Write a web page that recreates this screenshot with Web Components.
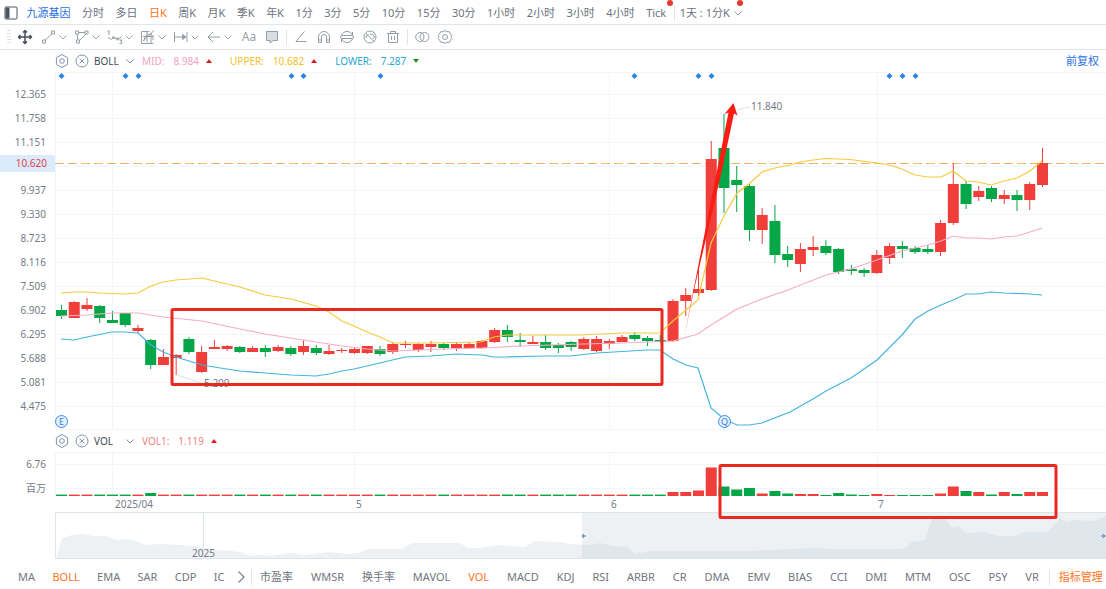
<!DOCTYPE html>
<html lang="zh-CN">
<head>
<meta charset="utf-8">
<meta name="viewport" content="width=device-width, initial-scale=1">
<title>九源基因 日K</title>
<style>
  html, body { margin: 0; background: #fff; }
  body {
    font-family: "Noto Sans", "Noto Sans CJK SC", sans-serif;
    font-size: 11px; line-height: 16px; color: #747b86;
    --up: #f03e3b; --down: #04a647; --rule: #dfe6ea; --grid: #f1f6f8;
    --accent: #ff7425; --link: #2b6fe3; --mark: #ea2a20;
  }
</style>
</head>
<body>
<stock-workspace></stock-workspace>

<script>
const BASE = `*{box-sizing:border-box} button{font:inherit;color:inherit;background:none;border:0;padding:0;margin:0;cursor:pointer;white-space:nowrap}
svg{display:block} .ico{fill:none;stroke:currentColor;stroke-width:1;stroke-linejoin:round}`;

function define(tag, css, html) {
  const tpl = document.createElement('template');
  tpl.innerHTML = `<style>${BASE}${css}</style>`;
  customElements.define(tag, class extends HTMLElement {
    connectedCallback() {
      if (this.shadowRoot) return;
      const root = this.attachShadow({ mode: 'open' });
      root.append(tpl.content.cloneNode(true));
      const body = document.createElement('template');
      body.innerHTML = typeof html === 'function' ? html(this) : html;
      root.append(body.content);
    }
  });
}

/* ---------- icons ---------- */
const ICONS = {
  panel: '<rect x="2" y="2" width="12" height="12" rx="1"/><path d="M3 3h3v10H3z" fill="currentColor"/>',
  move: '<path d="M8 1.5v13M1.5 8h13M6 3.5l2-2 2 2M6 12.5l2 2 2-2M3.5 6l-2 2 2 2M12.5 6l2 2-2 2" stroke-width="1.5"/>',
  line: '<rect x="1.5" y="11" width="3" height="3"/><rect x="10.5" y="2" width="3" height="3"/><path d="M4.5 11l6-6"/>',
  shape: '<rect x="1.5" y="2" width="3" height="3"/><rect x="11" y="2" width="3" height="3"/><rect x="2.5" y="11" width="3" height="3"/><path d="M4.5 3.5H11M3 5l.8 6M5.5 11.5L12 5"/>',
  wave: '<path d="M.5 3L2 1.5V6M1 8.500l3.500 2 2-2 4 1.500 4-2M12.500 11h2.500l-1.500 1.500q2 0 1.500 1.500t-2.500.5"/><circle cx="6.500" cy="8.500" r="1"/><circle cx="10.500" cy="10" r="1"/>',
  hatch: '<path d="M1.5 2.500v12h12M1.5 2.500h8M3 12L14 1.500M3 7.500h10M7 2.500v11M11 5v9M4 12q0-7 8-7M13 6v5"/>',
  measure: '<path d="M1.5 3v10M14 3v10M2 8h11"/><path d="M9.5 5.500L13 8l-3.500 2.500z" fill="currentColor"/>',
  back: '<path d="M14 8H2M7 3L2 8l5 5"/>',
  note: '<path d="M2.500 2.500h11v9H9l-3 2.500v-2.500H2.500z" fill="#d9dde2"/>',
  angle: '<path d="M11.500 2.500L3 12.500h10.500"/>',
  magnet: '<path d="M2.500 13.500V8a5.500 5.500 0 0 1 11 0v5.500h-3V8a2.500 2.500 0 0 0-5 0v5.500zM2.500 11h3M10.500 11h3"/>',
  sync: '<path d="M2.500 6a6 6 0 0 1 11 0M13.500 10a6 6 0 0 1-11 0"/><rect x="1.500" y="6.500" width="13" height="3" rx="1.500"/><path d="M13.500 3v3M2.500 13v-3"/>',
  hide: '<circle cx="8" cy="8" r="6"/><path d="M3.500 4l9 9M4 9q0-3 2.500-3.500M8 5q3.500 0 4.500 3-.5 1.500-1.500 2"/>',
  trash: '<path d="M2 4.500h12M5.500 4.500v-2h5v2M3.500 4.500v9h9v-9M6.500 7v4M9.500 7v4"/>',
  link: '<path d="M8 3.900A4.500 4.500 0 1 0 8 12.100"/><circle cx="10.500" cy="8" r="4.500"/><path d="M8 4a5 5 0 0 1 0 8"/>',
  gear: '<path d="M8 1.500l2 1.300 2.400-.1 1 2.300 1.400 1.500L14 8l.8 1.500-1.400 1.500-1 2.300-2.400-.1L8 14.500l-2-1.300-2.400.1-1-2.300-1.400-1.500L2 8l-.8-1.500L2.600 5l1-2.300 2.400.1z"/><circle cx="8" cy="8" r="2.500"/>',
  hex: '<path d="M8 1.500l5.600 3.200v6.600L8 14.500l-5.600-3.200V4.700z"/><circle cx="8" cy="8" r="2.300"/>',
  close: '<circle cx="8" cy="8" r="6"/><path d="M5.700 5.700l4.600 4.600M10.300 5.700l-4.600 4.600"/>',
  down: '<path d="M4.500 6.500L8 10l3.500-3.500"/>',
  next: '<path d="M5.500 2.500L11 8l-5.500 5.500" stroke-width="1.300"/>'
};
const svgIcon = n => `<svg class="ico" width="16" height="16" viewBox="0 0 16 16" aria-hidden="true">${ICONS[n]}</svg>`;
define('chart-icon', ':host{display:block;width:16px;height:16px;flex:none}', el => svgIcon(el.getAttribute('name')));

/* ---------- period bar ---------- */
define('period-bar', `
  :host{display:block;border-bottom:1px solid var(--rule)}
  nav{display:flex;align-items:center;justify-content:space-between;max-width:746px;height:24px;padding:2px 0 0 3px;color:#6c737e}
  chart-icon{color:#4c5462}
  .name{color:var(--link);margin-left:-4px}.on{color:var(--accent)}
  .dot{position:relative}
  .dot::after{content:"";position:absolute;right:-7px;top:-5px;width:6px;height:6px;border-radius:50%;background:#e33a35}
  .more{display:flex;align-items:center;border-left:1px solid var(--rule);padding-left:5px;margin-left:-4px}
  .more chart-icon{color:#9aa3b0}.more::after{right:3px}`,
  `<nav aria-label="周期"><chart-icon name="panel"></chart-icon><button class="name">九源基因</button>` +
  '分时 多日 日K 周K 月K 季K 年K 1分 3分 5分 10分 15分 30分 1小时 2小时 3小时 4小时 Tick'.split(' ')
    .map(t => `<button class="${t === '日K' ? 'on' : t === 'Tick' ? 'dot' : ''}">${t}</button>`).join('') +
  `<button class="more dot">1天 : 1分K<chart-icon name="down"></chart-icon></button></nav>`);

/* ---------- drawing tools ---------- */
define('draw-toolbar', `
  :host{display:block;border-bottom:1px solid var(--rule)}
  div{display:flex;align-items:center}
  .bar{height:24px;padding-left:7px;color:#969da7}
  .grip{width:4px;height:15px;margin-right:6px;background:repeating-linear-gradient(#dde1e6 0 1px,transparent 1px 3px)}
  .first{color:#454d5c;margin-right:8px}
  .menus{gap:5px}.menus button{display:flex}.menus chart-icon+chart-icon{margin-left:-2px;width:14px;overflow:hidden}
  .menus chart-icon+chart-icon{color:#9ba4b0}
  .single{gap:7px;padding:0 6px}.menus+.single{padding-left:7px}.single+.single{border-left:1px solid var(--rule)}
  .text{width:16px;font-size:12px}`,
  `<div class="bar"><span class="grip"></span><button class="first" aria-label="move"><chart-icon name="move"></chart-icon></button>
   <div class="menus">${['line','shape','wave','hatch','measure','back'].map(n => `<button aria-label="${n}"><chart-icon name="${n}"></chart-icon><chart-icon name="down"></chart-icon></button>`).join('')}</div>
   <div class="single"><button class="text">Aa</button><button aria-label="note"><chart-icon name="note"></chart-icon></button></div>
   <div class="single">${['angle','magnet','sync','hide','trash'].map(n => `<button aria-label="${n}"><chart-icon name="${n}"></chart-icon></button>`).join('')}</div>
   <div class="single">${['link','gear'].map(n => `<button aria-label="${n}"><chart-icon name="${n}"></chart-icon></button>`).join('')}</div></div>`);

/* ---------- indicator legend ---------- */
define('indicator-legend', `
  :host{display:flex;align-items:center;height:22px;padding:0 7px 0 54px;font-size:10px}
  .tool{color:#7f93ad;margin-right:4px}
  .name{display:flex;align-items:center;justify-content:space-between;min-width:44px;color:#434a56}
  .name chart-icon{color:#8091a6}
  ::slotted(a){margin-left:auto;font-size:11px;color:var(--link);text-decoration:none}`,
  el => `<button class="tool" aria-label="settings"><chart-icon name="hex"></chart-icon></button><button class="tool" aria-label="close"><chart-icon name="close"></chart-icon></button>
   <button class="name">${el.getAttribute('name')}<chart-icon name="down"></chart-icon></button><slot></slot>`);

define('legend-value', `
  :host{display:flex;align-items:center;margin-left:4px;margin-right:14px}
  b{font-weight:400;margin:0 7px 0 9px}
  i{width:0;height:0;border:3px solid transparent;border-top:0;border-bottom:4px solid #d3201f}
  :host([trend="down"]) i{border-bottom:0;border-top:4px solid #279322}`,
  `<slot name="label"></slot><b><slot></slot></b><i></i>`);

/* ---------- market data: [rising, high, bodyTop, bodyBottom, low] on the panel's vertical grid ---------- */
const CANDLES = [
  [0,305,310,316,319],[1,301,302,318,318],[1,298,305,309,311],[0,305,306,318,323],[0,311,320,323,323],[0,313,313,325,327],
  [1,325,328,331,333],[0,339,340,365,369],[1,349,357,365,365],[1,354,355,358,375],[0,337,339,352,354],[1,346,352,372,373],
  [1,340,347,349,349],[1,345,346,349,351],[0,346,347,352,353],[1,346,348,352,352],[0,345,348,352,357],[1,345,347,351,352],
  [0,346,348,354,356],[1,340,346,352,355],[0,345,348,353,355],[1,345,351,354,355],[1,348,350,351,353],[1,347,349,353,354],
  [1,346,346,353,354],[0,346,349,354,356],[1,342,344,352,354],[1,341,344,345,348],[1,343,344,350,352],[1,341,344,347,352],
  [0,343,344,348,350],[1,343,344,348,351],[1,342,344,348,348],[1,340,341,348,349],[1,328,330,342,343],[0,325,330,337,342],
  [0,333,340,342,347],[1,336,342,344,344],[0,335,342,348,350],[0,343,345,348,353],[0,341,342,347,351],[1,337,339,349,350],
  [1,336,339,351,352],[1,339,341,344,349],[1,335,337,342,342],[0,332,335,339,341],[0,336,338,341,346],[0,335,340,342,343],
  [1,299,301,341,342],[1,288,295,301,316],[1,266,289,293,296],[1,141,159,290,291],[0,114,148,188,213],[0,166,180,185,212],
  [0,184,186,230,241],[1,208,215,230,244],[0,205,221,255,263],[0,246,254,260,267],[1,243,249,264,272],[1,236,247,250,256],
  [0,240,246,253,255],[0,248,249,272,274],[0,265,269,271,275],[0,268,270,273,277],[1,250,255,273,274],[1,243,246,258,264],
  [0,241,246,249,258],[0,246,248,252,254],[0,245,249,252,254],[1,220,223,252,256],[1,163,184,223,225],[0,181,184,204,209],
  [1,186,191,197,201],[0,186,188,199,202],[1,190,195,199,204],[0,190,195,200,211],[1,182,184,200,210],[1,148,163,185,187]];
const VOLUMES = [...Array(48)].map((_, i) => i === 7 ? 3 : 1.4)
  .concat([4,4,5.5,28.5,9.5,6.5,8,2.5,5,2.5,2,2,1,3,1.5,1,2,1,1,1,1,2.5,9.5,5,4,1.5,4,2,4,4]);
const BANDS = {
  '#f8c93c': '61,293 74,292 87,292 100,293 125,294 138,293 151,286 163,282 176,280 202,278 214,281 240,287 265,295 278,297 291,299 316,306 329,312 342,321 354,326 367,332 380,337 393,343 430,343 481,342 494,337 507,335 580,335 622,333 660,333 673,321 698,300 711,243 724,216 737,193 749,184 762,172 775,168 790,165 800,162 813,160 826,158.5 850,159.5 877,163 889,165 902,169 915,175 928,177 941,177 953,171 966,181 978,182 991,185 1004,181 1017,178 1030,171 1042,161',
  '#f7adc4': '61,316 87,315 112,313 138,313 163,317 202,321 240,329 265,334 303,340 342,346 367,349 393,351 443,349 482,348 520,346 583,344 622,343 673,341 698,334 711,325 737,309 762,299 788,290 826,275 851,269 877,260 902,251 928,245 941,241 953,236 966,238 979,238 991,239 1004,237 1017,236 1030,232 1042,228',
  '#45b4dc': '61,339 74,340 87,337 112,332 125,332 138,333 151,345 163,352 176,357 202,365 214,367 240,371 265,373 291,375 316,376 329,374 342,371 354,369 380,363 405,357 430,356 456,354 482,355 494,357 507,357 545,356 570,356 597,353 647,350 660,350 673,359 686,365 698,368 711,408 724,419 737,425 749,425 762,423 790,412 813,399 826,391 851,378 877,360 902,335 915,319 928,311 941,305 953,300 966,294 978,294 991,292 1004,293 1030,294 1042,295'
};
const STEP = 12.74, cx = i => 61.5 + STEP * i;
const pct = x => ((x - 55) / 10.51).toFixed(3) + '%';
const vLines = (a, b, xs) => xs.map(x => `<path class="grid" d="M${x} ${a}V${b}"/>`).join('');
const hLines = ys => ys.map(y => `<path class="grid" d="M55 ${y}H1106"/>`).join('');
const MONTHS = [55.5, 112.5, 354.5, 609.5, 877.5];
const body = (i, a, b) => `<path stroke="none" d="M${cx(i) - 5.5} ${a}h11V${b}h-11z"/>`;
const plot = (top, h, inner) => `<svg width="100%" height="${h}" viewBox="55 ${top} 1051 ${h}" preserveAspectRatio="none" aria-hidden="true">${inner}</svg>`;
const PANEL = `
  :host{display:grid;grid-template-columns:55px minmax(0,1fr)}
  .plot{position:relative}
  .axis{text-align:right;padding-right:9px;font-size:10px;line-height:24px}
  .axis span{display:block;height:24px}
  .grid{stroke:var(--grid);fill:none} path,polyline{vector-effect:non-scaling-stroke}
  .r{fill:var(--up);stroke:var(--up)}.g{fill:var(--down);stroke:var(--down)}
  .last{stroke:#f2b36c;stroke-dasharray:9 4}
  .tag{position:absolute;font-size:10px;line-height:14px;white-space:nowrap}`;

define('price-panel', PANEL + `
  :host{position:relative}
  .axis{padding-top:10px}
  .current{position:absolute;left:0;top:83px;width:55px;height:17px;line-height:17px;padding-right:8px;background:#dcebfc;color:#df3f46;font-size:10px;text-align:right}
  .badge{position:absolute;top:343px;width:13px;height:13px;margin-left:-6px;border:1px solid #3b8cec;border-radius:50%;background:#e3f0fe;color:#2f80e8;font-size:9px;line-height:11px;text-align:center}`,
  () => `<div class="axis">${['12.365','11.758','11.151','','9.937','9.330','8.723','8.116','7.509','6.902','6.295','5.688','5.081','4.475'].map(t => `<span>${t}</span>`).join('')}</div>
  <div class="plot">${plot(72, 358,
    hLines([72.5, ...Array.from({ length: 14 }, (_, i) => 94.5 + 24 * i), 429.5]) + vLines(72, 430, MONTHS) +
    [61,125,138,291,303,380,634,698,711,889,902,915].map(x => `<path d="M${x + .5} 73l3 3-3 3-3-3z" fill="#2b83e4"/>`).join('') +
    `<path class="last" d="M55 163.5H1106"/>` +
    CANDLES.map(([up, h, a, b, l], i) => `<g class="${up ? 'r' : 'g'}"><path d="M${cx(i)} ${h}V${l}"/>${body(i, a, b)}</g>`).join('') +
    Object.entries(BANDS).map(([c, p]) => `<polyline points="${p}" fill="none" stroke="${c}" stroke-width="1.2"/>`).join('') +
    `<path d="M177 375l24 8M737 110l13-3" stroke="#dde2e6" fill="none"/>`)}
    <span class="tag" style="left:${pct(751)};top:27px">11.840</span><span class="tag" style="left:${pct(204)};top:304px">5.209</span>
    <span class="badge" style="left:${pct(61)}">E</span><span class="badge" style="left:${pct(724)}">Q</span></div>
  <span class="current">10.620</span>`);

define('volume-panel', PANEL + `.dates{position:relative;height:16px}.dates .tag{top:1px}`,
  () => `<div class="axis"><span>6.76</span><span>百万</span></div><div><div class="plot">${plot(452, 44,
    hLines([452.5, 464.5, 488.5]) + vLines(452, 496, MONTHS) +
    VOLUMES.map((v, i) => `<g class="${CANDLES[i][0] ? 'r' : 'g'}">${body(i, 496 - v, 496)}</g>`).join(''))}</div>
    <div class="dates">${[['2025/04',115],['5',356],['6',611],['7',878]].map(([t, x]) => `<span class="tag" style="left:${pct(x)}">${t}</span>`).join('')}</div></div>`);

define('range-navigator', `
  :host{display:block;position:relative;margin-left:55px;height:47px}
  span{position:absolute;bottom:-1px;left:${pct(192)};font-size:10px;line-height:14px}`,
  `<svg width="100%" height="47" viewBox="55 512 1051 47" preserveAspectRatio="none" aria-hidden="true">
   <polygon fill="#edf1f4" points="56,558 58,552 62,538 72,535 82,534 95,536 105,536 117,540 127,539 137,541 145,545 160,544 180,545 200,547 215,550 230,551 240,552 250,556 260,555 270,556 290,553 305,555 320,553 330,552 345,554 358,553 367,549 402,549 412,543 460,543 468,548 480,548 500,545 525,547 534,541 560,542 570,544 590,545 600,543 613,546 628,547 635,554 650,551 750,551 770,550 815,548 830,549 903,549 912,542 925,540 932,519 945,518 952,528 958,526 966,533 985,532 998,536 1015,536 1025,532 1048,532 1060,518 1067,522 1075,520 1095,521 1106,516 1106,558"/>
   <rect x="582" y="513" width="524" height="45" fill="#becbd8" fill-opacity=".28"/>
   <path d="M55.5 558V512.5H1106M203.5 513v45M55 558.5H1106" fill="none" stroke="#dde4ea"/>
   <path d="M586 536h-4m2-2l-2 2 2 2M1101 536h4m-2-2l2 2-2 2" fill="none" stroke="#55779c"/></svg><span>2025</span>`);

/* hand-drawn marks laid over the whole chart */
define('annotation-layer', `
  :host{position:absolute;inset:0 0 0 55px;pointer-events:none}
  rect{fill:none;stroke:var(--mark);stroke-width:3;vector-effect:non-scaling-stroke}`,
  `<svg width="100%" height="100%" viewBox="55 50 1051 509" preserveAspectRatio="none" aria-hidden="true">
   <rect x="172" y="309.5" width="490" height="75" rx="1"/><rect x="720" y="465.5" width="336" height="52" rx="1"/>
   <polygon fill="#fb1d12" points="684,338 728.5,112.5 724.5,114 733.5,103 737.5,115.5 734,113.5 722,170 694,290"/></svg>`);

/* ---------- indicator tabs ---------- */
const tabs = s => s.split(' ').map(t => `<button class="${t === 'BOLL' || t === 'VOL' ? 'on' : ''}">${t}</button>`).join('');
define('indicator-tabs', `
  :host{display:flex;align-items:center;height:36px;padding:0 3px 0 18px;color:#70757e}
  div{display:flex;align-items:center;justify-content:space-between}
  .main{width:228px}
  .main chart-icon{color:#7b8795;margin:0 -3px 0 -9px}
  .sub{flex:1;margin-left:5px;padding-left:8px;border-left:1px solid var(--rule)}
  .on,.manage{color:var(--accent)}
  .manage{border-left:1px solid var(--rule);padding-left:9px;margin-left:-8px}`,
  `<div class="main">${tabs('MA BOLL EMA SAR CDP IC')}<button aria-label="more"><chart-icon name="next"></chart-icon></button></div>
   <div class="sub">${tabs('市盈率 WMSR 换手率 MAVOL VOL MACD KDJ RSI ARBR CR DMA EMV BIAS CCI DMI MTM OSC PSY VR')}<button class="manage">指标管理</button></div>`);

define('stock-workspace', `
  :host{display:block}
  .chart{position:relative}
  .mid{color:#f5a3bf}.upper{color:#f4bf22}.lower{color:#28a6d6}.vol{color:#f57f7c}`,
  `<period-bar></period-bar><draw-toolbar></draw-toolbar>
   <main class="chart">
     <indicator-legend name="BOLL">
       <legend-value class="mid"><span slot="label">MID:</span>8.984</legend-value>
       <legend-value class="upper"><span slot="label">UPPER:</span>10.682</legend-value>
       <legend-value class="lower" trend="down"><span slot="label">LOWER:</span>7.287</legend-value>
       <a href="#">前复权</a>
     </indicator-legend>
     <price-panel></price-panel>
     <indicator-legend name="VOL"><legend-value class="vol"><span slot="label">VOL1:</span>1.119</legend-value></indicator-legend>
     <volume-panel></volume-panel>
     <range-navigator></range-navigator>
     <annotation-layer></annotation-layer>
   </main>
   <indicator-tabs></indicator-tabs>`);
</script>
</body>
</html>
